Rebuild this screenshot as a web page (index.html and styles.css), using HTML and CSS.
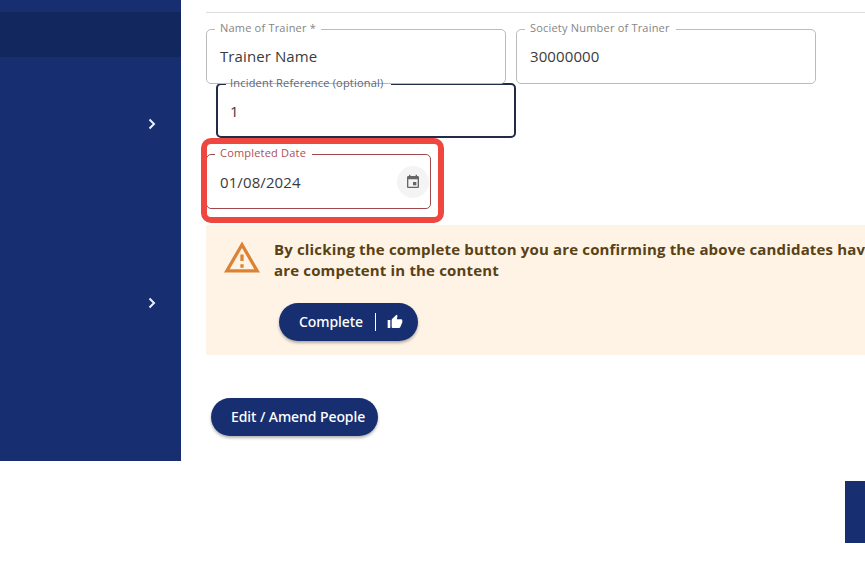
FILE: index.html
```html
<!DOCTYPE html>
<html lang="en">

<head>
    <meta charset="UTF-8">
    <meta name="viewport" content="width=device-width, initial-scale=1.0">
    <title>Training record</title>
    <link rel="stylesheet" href="styles.css">
</head>

<body>
    <div class="page">
        <div class="sidebar">
            <div class="nav_item active"></div>
            <div class="nav_item group">
                <svg class="chevron" viewBox="0 0 8 12"><path d="M1.5 1.5 6 6l-4.5 4.5" /></svg>
            </div>
            <div class="nav_item group second">
                <svg class="chevron" viewBox="0 0 8 12"><path d="M1.5 1.5 6 6l-4.5 4.5" /></svg>
            </div>
        </div>
        <div class="content">
            <div class="row">
                <fieldset class="field">
                    <legend class="name">Name of Trainer *</legend>
                    <div class="value">Trainer Name</div>
                </fieldset>
                <fieldset class="field">
                    <legend class="society">Society Number of Trainer</legend>
                    <div class="value">30000000</div>
                </fieldset>
            </div>
            <fieldset class="field focused">
                <legend class="incident">Incident Reference (optional)</legend>
                <div class="value">1</div>
            </fieldset>
            <div class="date_box">
                <fieldset class="field error">
                    <legend class="completed">Completed Date</legend>
                    <div class="value">01/08/2024</div>
                    <button class="picker">
                        <svg viewBox="0 0 24 24"><path d="M17 12h-5v5h5v-5zM16 1v2H8V1H6v2H5c-1.11 0-1.99.9-1.99 2L3 19c0 1.1.89 2 2 2h14c1.1 0 2-.9 2-2V5c0-1.1-.9-2-2-2h-1V1h-2zm3 18H5V8h14v11z" /></svg>
                    </button>
                </fieldset>
                <div class="highlight"></div>
            </div>
            <div class="warning">
                <svg class="warning_icon" viewBox="1 2 22 19"><path d="M12 5.99L19.53 19H4.47L12 5.99M12 2L1 21h22L12 2zm1 14h-2v2h2v-2zm0-6h-2v4h2v-4z" /></svg>
                <div class="warning_body">
                    <p>By clicking the complete button you are confirming the above candidates have<br>are competent in the content</p>
                    <button class="btn complete">
                        <span>Complete</span>
                        <i class="divider"></i>
                        <svg class="thumb" viewBox="0 0 24 24"><path d="M1 21h4V9H1v12zm22-11c0-1.1-.9-2-2-2h-6.31l.95-4.57.03-.32c0-.41-.17-.79-.44-1.06L14.17 1 7.59 7.59C7.22 7.95 7 8.45 7 9v10c0 1.1.9 2 2 2h9c.83 0 1.54-.5 1.84-1.22l3.02-7.05c.09-.23.14-.47.14-.73v-2z" /></svg>
                    </button>
                </div>
            </div>
            <button class="btn edit"><span>Edit / Amend People</span></button>
        </div>
    </div>
    <div class="footer">
        <div class="footer_block"></div>
    </div>
</body>

</html>
```

FILE: styles.css
```css
* {
    margin: 0;
    padding: 0;
    box-sizing: border-box;
}

body {
    font-family: "Open Sans", "Noto Sans", sans-serif;
    background: #fff;
    overflow: hidden;
}

.page {
    display: flex;
    height: 461px;
}

.sidebar {
    width: 181px;
    flex-shrink: 0;
    padding-top: 12px;
    background: #172f70;
}

.nav_item {
    height: 45px;
}

.nav_item.active {
    background: #12275d;
}

.nav_item.group {
    display: flex;
    align-items: center;
    justify-content: flex-end;
    margin-top: 44px;
    padding-right: 25px;
}

.nav_item.group.second {
    margin-top: 134px;
}

.chevron {
    width: 8px;
    height: 12px;
    fill: none;
    stroke: #e8f2ff;
    stroke-width: 2;
}

.content {
    flex: 1;
    min-width: 0;
    margin: 12px 0 0 25px;
    border-top: 1px solid #ddd;
}

.row {
    display: flex;
    gap: 10px;
    margin-top: 10px;
}

.field {
    width: 300px;
    height: 61px;
    padding: 0 13px;
    border: 1px solid #bbb;
    border-radius: 5px;
}

.field legend {
    height: 13px;
    margin-left: -5px;
    padding-left: 5px;
    color: #858585;
    font-size: 11px;
    line-height: 9px;
    white-space: nowrap;
    letter-spacing: 0.2px;
}

.name {
    width: 106px;
}

.society {
    width: 151px;
}

.incident {
    width: 165px;
}

.completed {
    width: 97px;
}

.value {
    padding-top: 9px;
    color: #3b3b3b;
    font-size: 15px;
    line-height: 22px;
    letter-spacing: 0.1px;
}

.field.focused {
    margin: -7px 0 0 10px;
    padding: 0 12px;
    border: 2px solid #232c46;
}

.field.focused legend {
    margin-left: -4px;
    padding-left: 4px;
    color: #5c6578;
    line-height: 11px;
}

.field.focused .value,
.field.error .value {
    padding-top: 10px;
}

.date_box {
    position: relative;
    margin-top: 10px;
}

.field.error {
    position: relative;
    width: 225px;
    border-color: #a04a50;
}

.field.error legend {
    color: #ae4f54;
}

.picker {
    position: absolute;
    top: 5px;
    right: 1px;
    display: flex;
    align-items: center;
    justify-content: center;
    width: 32px;
    height: 32px;
    border: none;
    border-radius: 50%;
    background: #f4f4f4;
    cursor: pointer;
}

.picker svg {
    width: 16px;
    height: 16px;
    fill: #666;
}

/* red box over the date field */
.highlight {
    position: absolute;
    top: -10px;
    left: -5px;
    width: 243px;
    height: 85px;
    border: 6px solid #ef463f;
    border-radius: 10px;
}

.warning {
    display: flex;
    height: 130px;
    margin-top: 16px;
    padding: 14px 0 0 18px;
    background: #fff3e5;
}

.warning_icon {
    width: 36px;
    height: 32px;
    margin-top: 2px;
    flex-shrink: 0;
    fill: #db8235;
}

.warning_body {
    margin-left: 14px;
}

.warning p {
    color: #584215;
    font-size: 15px;
    font-weight: 700;
    line-height: 21px;
    white-space: nowrap;
    letter-spacing: 0.16px;
}

.btn {
    display: flex;
    align-items: center;
    height: 38px;
    padding-left: 20px;
    border: none;
    border-radius: 19px;
    background: #172f70;
    box-shadow: 0 2px 3px rgba(0, 0, 0, 0.3);
    color: #fff;
    font-family: "Noto Sans", "Open Sans", sans-serif;
    font-size: 14px;
    font-weight: 500;
    white-space: nowrap;
    letter-spacing: -0.07px;
    cursor: pointer;
}

.btn span {
    padding-bottom: 2px;
}

.complete {
    width: 139px;
    margin: 22px 0 0 5px;
}

.complete span {
    width: 76px;
    text-align: left;
}

.divider {
    width: 1px;
    height: 18px;
    background: #fff;
}

.thumb {
    width: 16px;
    height: 16px;
    margin-left: 11px;
    fill: #fff;
}

.edit {
    width: 167px;
    margin: 43px 0 0 5px;
}

.footer {
    display: flex;
    justify-content: flex-end;
    padding-top: 20px;
}

.footer_block {
    width: 20px;
    height: 62px;
    background: #172f70;
}
```
